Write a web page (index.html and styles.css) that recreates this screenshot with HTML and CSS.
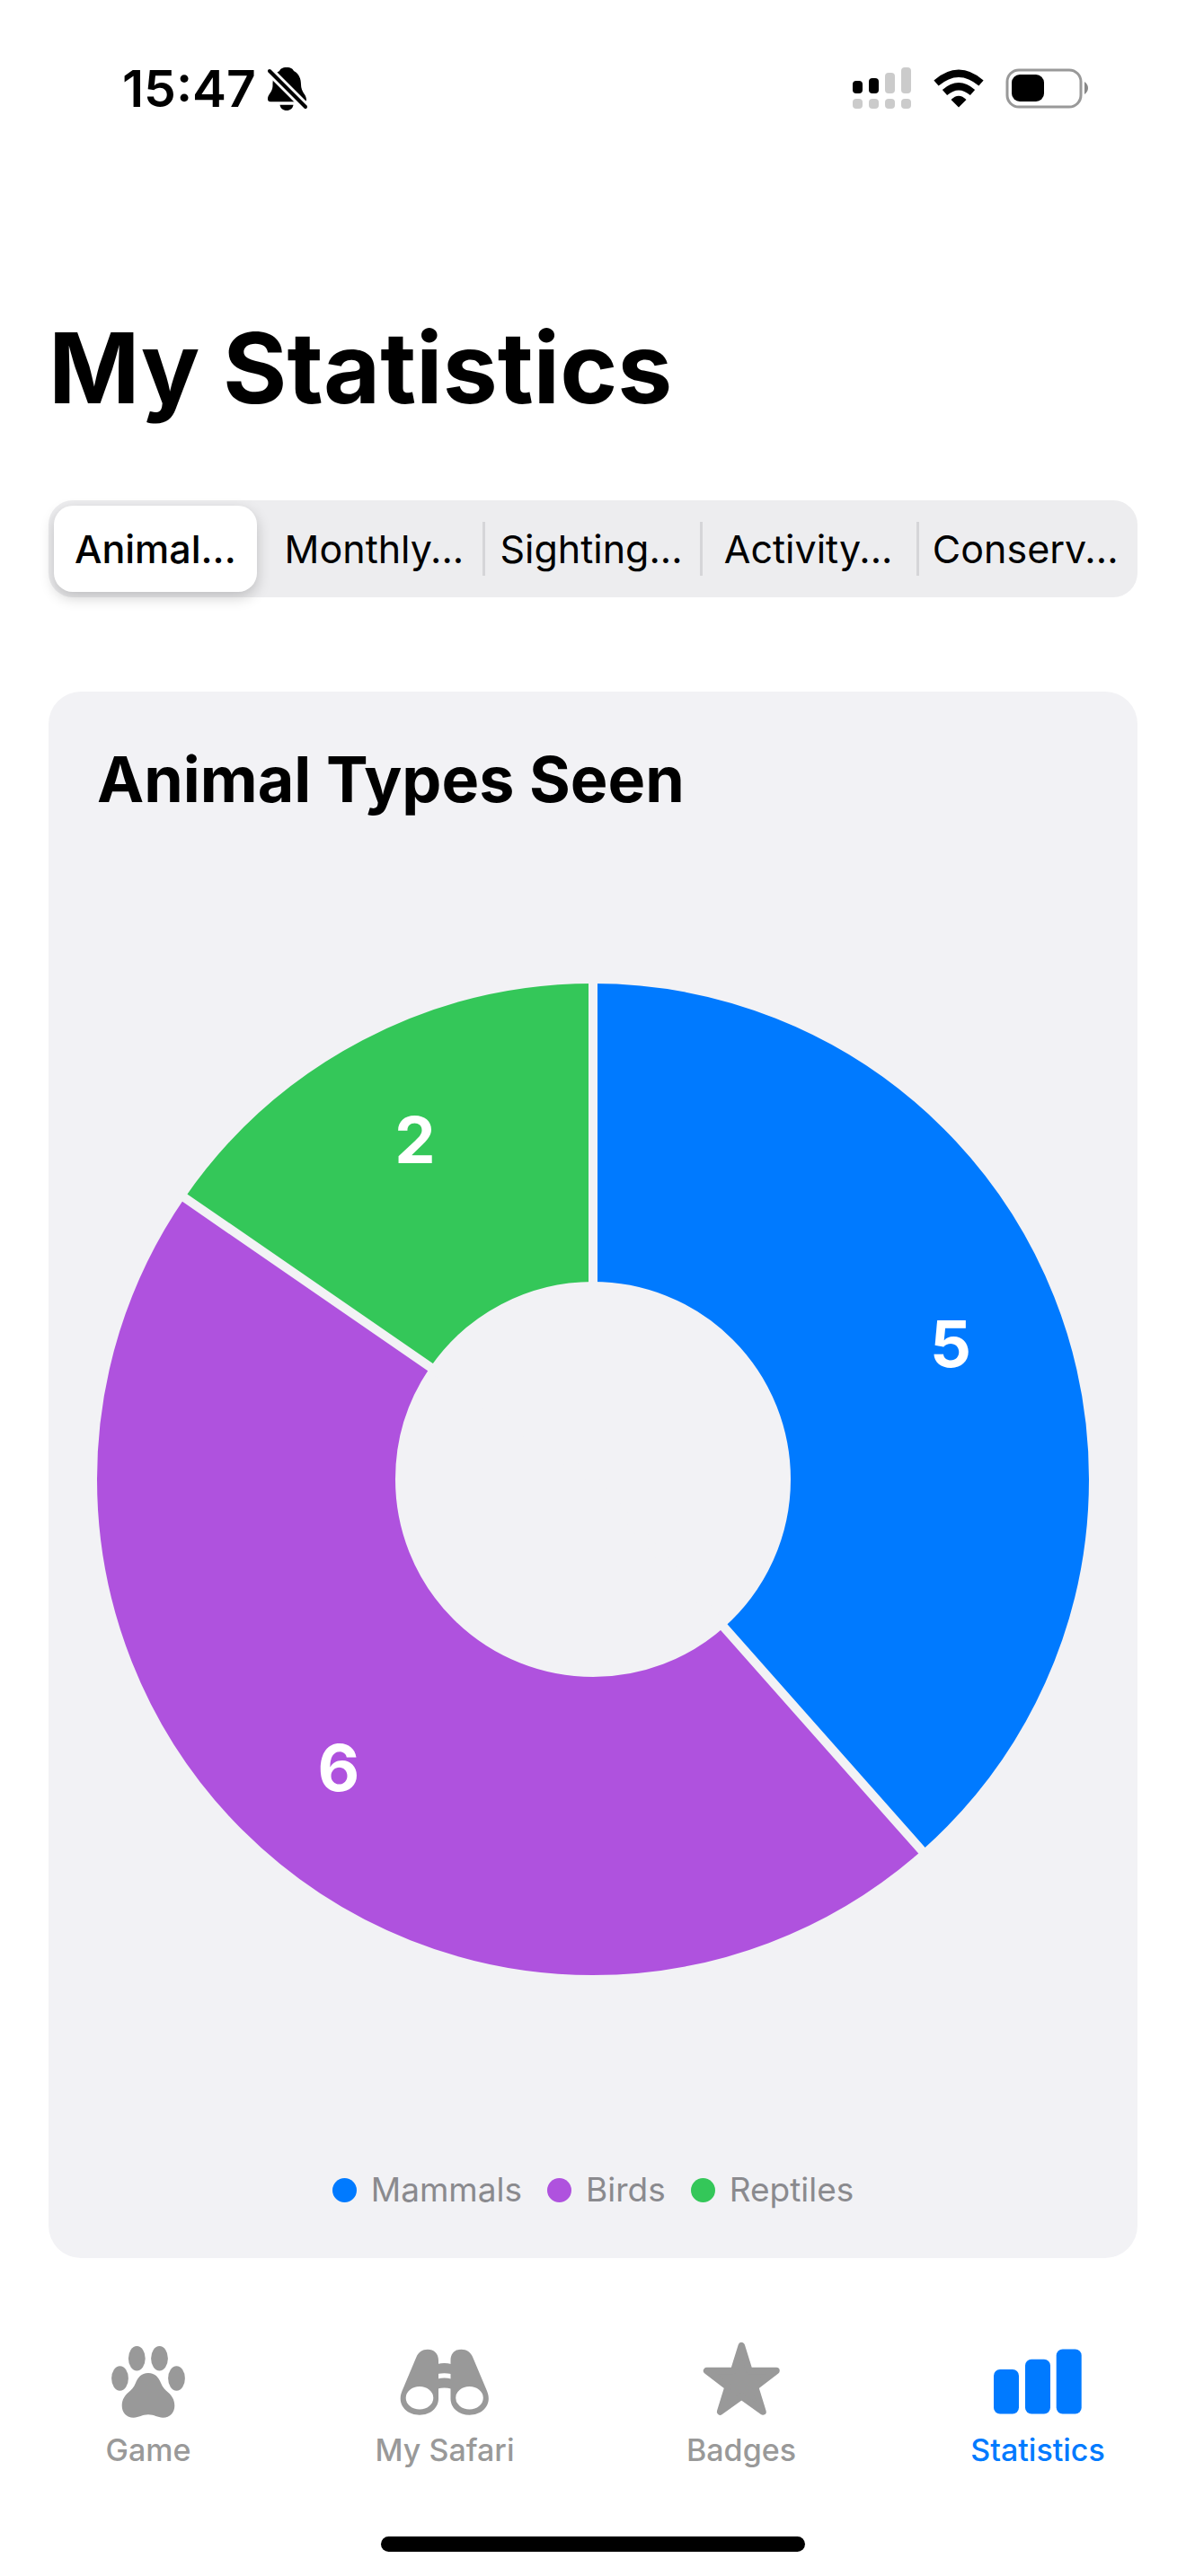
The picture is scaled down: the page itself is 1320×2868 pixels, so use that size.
FILE: index.html
```html
<!DOCTYPE html>
<html lang="en">
  <head>
    <meta charset="UTF-8" />
    <meta name="viewport" content="width=device-width, initial-scale=1.0" />
    <title>My Statistics</title>
    <link rel="stylesheet" href="styles.css">
  </head>
  <body>
    <header class="status-bar">
      <div class="status-left">
        <span class="time">15:47</span>
        <svg class="bell" viewBox="0 0 46 50" aria-hidden="true">
          <path d="M22 1C27 1 29 3 30 5C36 8 38 14 38 20C38 29 44 31 44 37Q44 39.300 41 39.300H4Q1 39.300 1 36C1 31 6 29 6.500 22C6.500 12 8 8 14 5C15 3 17 1 22 1Z" />
          <path d="M14.500 42.700H29.500C29 46.500 26 49 22 49S15 46.500 14.500 42.700Z" />
          <path d="M3 5L43 45" stroke="#fff" stroke-width="10" />
          <path d="M3 5L43 45" stroke="#000" stroke-width="4" stroke-linecap="round" />
        </svg>
      </div>
      <div class="status-right">
        <svg class="signal" viewBox="0 0 66 48" aria-hidden="true">
          <rect x="0" y="15" width="11" height="14" rx="4" />
          <rect x="18" y="12" width="11" height="17" rx="4" />
          <g fill="#cbcbcb">
            <rect x="36" y="6" width="11" height="23" rx="4" />
            <rect x="54" y="0" width="11" height="29" rx="4" />
            <rect x="0" y="35" width="11" height="11" rx="4" />
            <rect x="18" y="35" width="11" height="11" rx="4" />
            <rect x="36" y="35" width="11" height="11" rx="4" />
            <rect x="54" y="35" width="11" height="11" rx="4" />
          </g>
        </svg>
        <svg class="wifi" viewBox="0 0 56 44" aria-hidden="true">
          <path d="M28 42.500L19.500 34Q28 25.500 36.500 34Z" />
          <path d="M12.500 26Q28 12.500 43.500 26" fill="none" stroke="#000" stroke-width="8" />
          <path d="M3 15.500Q28 -6 53 15.500" fill="none" stroke="#000" stroke-width="8" />
        </svg>
        <svg class="battery" viewBox="0 0 94 46" aria-hidden="true">
          <rect x="2" y="2" width="82" height="41" rx="13" fill="none" stroke="#999" stroke-width="3" />
          <rect x="7" y="7" width="36" height="30" rx="9" />
          <path d="M88 15Q92 18 92 22T88 29Z" fill="#888" />
        </svg>
      </div>
    </header>

    <main class="content">
      <h1>My Statistics</h1>

      <div class="segments">
        <button class="segment active">Animal...</button>
        <button class="segment">Monthly...</button>
        <button class="segment">Sighting...</button>
        <button class="segment">Activity...</button>
        <button class="segment">Conserv...</button>
      </div>

      <section class="card">
        <h2>Animal Types Seen</h2>

        <!-- 13 sightings in total, so every ring is measured in 13ths -->
        <svg class="chart" viewBox="0 0 1104 1104" role="img" aria-label="5 mammals, 6 birds, 2 reptiles">
          <g class="slices" transform="rotate(-90 552 552)">
            <circle class="mammals" cx="552" cy="552" r="386" pathLength="13" stroke-dasharray="5 8" />
            <circle class="birds" cx="552" cy="552" r="386" pathLength="13" stroke-dasharray="6 7" stroke-dashoffset="-5" />
            <circle class="reptiles" cx="552" cy="552" r="386" pathLength="13" stroke-dasharray="2 11" stroke-dashoffset="-11" />
          </g>
          <path class="gaps" d="M552 552V-8M552 552L923 971M552 552L91 234" />
          <text x="950" y="427">5</text>
          <text x="269" y="899">6</text>
          <text x="354" y="200">2</text>
        </svg>

        <ul class="legend">
          <li><span class="dot mammals"></span>Mammals</li>
          <li><span class="dot birds"></span>Birds</li>
          <li><span class="dot reptiles"></span>Reptiles</li>
        </ul>
      </section>
    </main>

    <nav class="tab-bar">
      <a class="tab" href="#game">
        <svg viewBox="0 0 110 88" aria-hidden="true">
          <ellipse cx="42.300" cy="19.700" rx="9.400" ry="13.800" />
          <ellipse cx="67.500" cy="19.700" rx="9.400" ry="13.800" />
          <ellipse cx="23.500" cy="42" rx="9.400" ry="13.800" />
          <ellipse cx="86.500" cy="42" rx="9.400" ry="13.800" />
          <path d="M55 36C63 36 66.500 41 69 47C71 52 74 55 77 57.500C81 61 84.300 65.500 84.300 72.500C84.300 80 79 85.700 71.500 85.700C65 85.700 62 82.300 55 82.300C48 82.300 45 85.700 38.500 85.700C31 85.700 25.700 80 25.700 72.500C25.700 65.500 29 61 33 57.500C36 55 39 52 41 47C43.500 41 47 36 55 36Z" />
        </svg>
        Game
      </a>
      <a class="tab" href="#safari">
        <svg viewBox="0 0 110 88" aria-hidden="true">
          <path fill-rule="evenodd" d="M48 22C48 14 43 9.700 36 9.700C30 9.700 25.500 13 23.500 18L7.500 56C6.300 59 5.700 61.500 5.700 64.500C5.700 75 15 82.700 27 82.700C39 82.700 48 75 48 64.500ZM27 51A15.300 12.700 0 1 0 27 76.400A15.300 12.700 0 1 0 27 51Z" />
          <path fill-rule="evenodd" transform="translate(109.500) scale(-1 1)" d="M48 22C48 14 43 9.700 36 9.700C30 9.700 25.500 13 23.500 18L7.500 56C6.300 59 5.700 61.500 5.700 64.500C5.700 75 15 82.700 27 82.700C39 82.700 48 75 48 64.500ZM27 51A15.300 12.700 0 1 0 27 76.400A15.300 12.700 0 1 0 27 51Z" />
          <path d="M47 26Q54.700 24 62 26V37Q54.700 35.500 47 37ZM47 42.500Q54.700 40.500 62 42.500V53.500Q54.700 51.500 47 53.500Z" />
        </svg>
        My Safari
      </a>
      <a class="tab" href="#badges">
        <svg viewBox="0 0 110 88" aria-hidden="true">
          <path stroke="currentColor" stroke-width="7.500" stroke-linejoin="round" d="M55.300 5.600L64 33.500H94L70.500 51.500L79 79L55.300 62L31.600 79L40.100 51.500L16.600 33.500H46.600Z" />
        </svg>
        Badges
      </a>
      <a class="tab active" href="#statistics">
        <svg viewBox="0 0 110 88" aria-hidden="true">
          <rect x="6" y="32" width="28" height="49.500" rx="7" />
          <rect x="41" y="20.700" width="28" height="60.800" rx="7" />
          <rect x="75.700" y="9.500" width="28" height="72" rx="7" />
        </svg>
        Statistics
      </a>
    </nav>
    <div class="home-indicator"></div>
  </body>
</html>
```
FILE: styles.css
```css
* {
  box-sizing: border-box;
}

body {
  margin: 0;
  min-height: 100vh;
  display: flex;
  flex-direction: column;
  background: #fff;
  color: #000;
  font-family: Inter, "Liberation Sans", sans-serif;
}

h1,
h2 {
  margin: 0;
  font-weight: 700;
}

.status-bar {
  display: flex;
  justify-content: space-between;
  align-items: center;
  padding: 62px 107px 0 136px;
}

.status-left,
.status-right {
  display: flex;
  align-items: center;
}

.status-left {
  gap: 12px;
}

.status-right {
  gap: 24px;
}

.time {
  font-size: 57px;
  font-weight: 600;
  line-height: 74px;
}

.bell {
  width: 46px;
  height: 50px;
}

.signal {
  width: 66px;
  height: 48px;
}

.wifi {
  width: 56px;
  height: 44px;
}

.battery {
  width: 94px;
  height: 46px;
}

.content {
  padding: 208px 54px 0;
}

h1 {
  font-size: 109px;
  line-height: 130px;
}

.segments {
  display: grid;
  grid-template-columns: repeat(5, 1fr);
  margin-top: 83px;
  padding: 6px 4px 6px 0;
  background: #ededef;
  border-radius: 27px;
}

.segment {
  position: relative;
  height: 96px;
  padding: 0;
  border: none;
  border-radius: 21px;
  background: none;
  color: #000;
  font-family: inherit;
  font-size: 43px;
  white-space: nowrap;
  cursor: pointer;
}

.segment.active {
  margin: 0 10px 0 6px;
  background: #fff;
  box-shadow: 0 6px 16px rgba(0, 0, 0, 0.2);
  font-weight: 500;
}

/* hairline between two unselected segments */
.segment:not(.active) + .segment::before {
  content: "";
  position: absolute;
  left: 0;
  top: 18px;
  width: 3px;
  height: 60px;
  background: #d5d5d8;
}

.card {
  margin-top: 105px;
  padding: 54px;
  background: #f2f2f5;
  border-radius: 36px;
}

h2 {
  font-size: 70px;
  line-height: 88px;
}

.chart {
  display: block;
  width: 100%;
  margin-top: 183px;
}

.slices circle {
  fill: none;
  stroke: currentColor;
  stroke-width: 332px;
}

.gaps {
  stroke: #f2f2f5;
  stroke-width: 10px;
}

.chart text {
  fill: #fff;
  font-size: 72px;
  font-weight: 700;
  text-anchor: middle;
}

.mammals {
  color: #007aff;
}

.birds {
  color: #af52de;
}

.reptiles {
  color: #34c759;
}

.legend {
  display: flex;
  justify-content: center;
  gap: 28px;
  margin: 217px 0 0;
  padding: 0;
  list-style: none;
  color: #8a8a8e;
  font-size: 37px;
  line-height: 44px;
}

.legend li {
  display: flex;
  align-items: center;
  gap: 16px;
}

.dot {
  width: 27px;
  height: 27px;
  border-radius: 50%;
  background: currentColor;
}

.tab-bar {
  display: grid;
  grid-template-columns: repeat(4, 1fr);
  margin-top: auto;
}

.tab {
  display: flex;
  flex-direction: column;
  align-items: center;
  gap: 14px;
  color: #999;
  font-size: 34px;
  font-weight: 500;
  line-height: 40px;
  text-decoration: none;
}

.tab.active {
  color: #007aff;
}

.tab svg {
  width: 110px;
  height: 88px;
  fill: currentColor;
}

.home-indicator {
  width: 472px;
  height: 17px;
  margin: 76px auto 27px;
  border-radius: 9px;
  background: #000;
}
```
